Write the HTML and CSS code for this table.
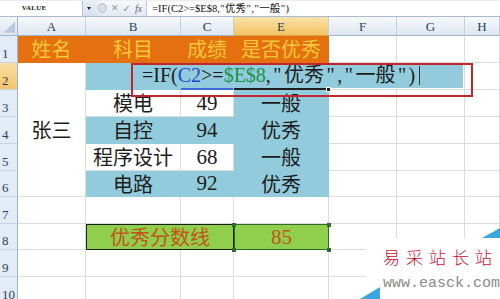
FILE: index.html
```html
<!DOCTYPE html>
<html lang="zh-CN">
<head>
<meta charset="utf-8">
<title>IF 公式</title>
<link rel="stylesheet" href="styles.css">
</head>
<body>
<div class="app">
  <div class="fbar">
    <div class="namebox">VALUE</div>
    <div class="nb-arrow"></div>
    <div class="fbtns">
      <span class="circ"></span>
      <span class="fx-x">✕</span>
      <span class="fx-ok">✓</span>
      <span class="fx-fx">fx</span>
    </div>
    <div class="finput">=IF(C2&gt;=$E$8,<span class="q">"</span>优秀<span class="q">"</span>,<span class="q">"</span>一般<span class="q">"</span>)</div>
  </div>

  <div class="sheet">
    <div class="corner"><svg width="18" height="19" viewBox="0 0 18 19"><polygon points="4,16 16,16 16,4" fill="#b7c9de"/></svg></div>
    <div class="ch">A</div><div class="ch">B</div><div class="ch">C</div><div class="ch sel">E</div><div class="ch">F</div><div class="ch">G</div><div class="ch">H</div>

    <div class="rh">1</div>
    <div class="c o">姓名</div><div class="c o">科目</div><div class="c o">成绩</div><div class="c o">是否优秀</div><div class="c"></div><div class="c"></div><div class="c"></div>

    <div class="rh sel">2</div>
    <div class="c merge-a">张三</div><div class="c b"></div><div class="c b"></div><div class="c b"></div><div class="c"></div><div class="c"></div><div class="c"></div>

    <div class="rh">3</div>
    <div class="c">模电</div><div class="c num">49</div><div class="c b">一般</div><div class="c"></div><div class="c"></div><div class="c"></div>

    <div class="rh">4</div>
    <div class="c b">自控</div><div class="c b num">94</div><div class="c b">优秀</div><div class="c"></div><div class="c"></div><div class="c"></div>

    <div class="rh">5</div>
    <div class="c">程序设计</div><div class="c num">68</div><div class="c b">一般</div><div class="c"></div><div class="c"></div><div class="c"></div>

    <div class="rh">6</div>
    <div class="c b">电路</div><div class="c b num">92</div><div class="c b">优秀</div><div class="c"></div><div class="c"></div><div class="c"></div>

    <div class="rh">7</div>
    <div class="c"></div><div class="c"></div><div class="c"></div><div class="c"></div><div class="c"></div><div class="c"></div><div class="c"></div>

    <div class="rh">8</div>
    <div class="c"></div><div class="c g merge-bc">优秀分数线</div><div class="c g ge num">85</div><div class="c"></div><div class="c"></div><div class="c"></div>

    <div class="rh">9</div>
    <div class="c"></div><div class="c"></div><div class="c"></div><div class="c"></div><div class="c"></div><div class="c"></div><div class="c"></div>

    <div class="rh">10</div>
    <div class="c"></div><div class="c"></div><div class="c"></div><div class="c"></div><div class="c"></div><div class="c"></div><div class="c"></div>

    <div class="editbox">=IF(<span class="ref-c">C2</span>&gt;=<span class="ref-e">$E$8</span>,<span class="q">"</span>优秀<span class="q">"</span>,<span class="q">"</span>一般<span class="q">"</span>)<span class="caret"></span></div>
    <div class="refline-c"></div>
    <div class="activeline"></div>
    <div class="handle"></div>
    <div class="ref-e8"><i class="d tl"></i><i class="d tr"></i><i class="d bl"></i><i class="d br"></i></div>
    <div class="redbox"></div>
  </div>

  <div class="watermark">
    <svg class="wm-bg" width="140" height="71" viewBox="0 0 140 71">
      <polygon points="6,10 140,10 140,71 6,71" fill="#ffffff"/>
      <polygon points="122,10 140,10 140,0" fill="#39a6df"/>
      <polygon points="0,71 20,71 20,59" fill="#39a6df"/>
    </svg>
    <p class="wm-cn">易采站长站</p>
    <p class="wm-url">www.easck.com</p>
  </div>
</div>
</body>
</html>
```

FILE: styles.css
```css
html, body {
  margin: 0;
  padding: 0;
}
body {
  width: 500px;
  height: 299px;
  overflow: hidden;
  background: #ffffff;
  font-family: "Liberation Serif", "Noto Sans CJK SC", serif;
  color: #1b1b1b;
}
.app {
  position: relative;
  width: 500px;
  height: 299px;
  overflow: hidden;
}

/* formula bar */
.fbar {
  display: flex;
  align-items: center;
  height: 17px;
  background: linear-gradient(#e9eef6, #d6e0ee);
  border-bottom: 1px solid #a8bbd3;
  box-sizing: border-box;
}
.namebox {
  width: 83px;
  height: 15px;
  box-sizing: border-box;
  background: #ffffff;
  border-right: 1px solid #b8c6d8;
  font-size: 7px;
  font-weight: bold;
  letter-spacing: 0.2px;
  color: #222;
  display: flex;
  align-items: center;
  justify-content: center;
  padding-right: 14px;
}
.nb-arrow {
  width: 0;
  height: 0;
  margin: 0 4px 0 4px;
  border-left: 2.5px solid transparent;
  border-right: 2.5px solid transparent;
  border-top: 3px solid #222;
}
.fbtns {
  display: flex;
  align-items: center;
  gap: 4px;
  height: 15px;
  padding: 0 4px 0 2px;
  border-radius: 8px 0 0 8px;
  background: linear-gradient(#f7f9fc, #e3e9f2);
}
.circ {
  width: 10px;
  height: 10px;
  border-radius: 50%;
  background: #d7dde6;
  border: 1px solid #b6c0cc;
  box-sizing: border-box;
}
.fx-x {
  font-family: "DejaVu Sans", sans-serif;
  font-size: 9px;
  color: #8a94a2;
}
.fx-ok {
  font-family: "DejaVu Sans", sans-serif;
  font-size: 10px;
  color: #7c9a7a;
}
.fx-fx {
  font-style: italic;
  font-size: 10px;
  color: #667;
}
.finput {
  flex: 1;
  height: 15px;
  background: #ffffff;
  border-left: 1px solid #b8c6d8;
  font-size: 10.5px;
  line-height: 15px;
  padding-left: 5px;
  white-space: nowrap;
  color: #111;
}
.finput .q {
  padding: 0 0.5px;
}

/* sheet */
.sheet {
  position: relative;
  display: grid;
  grid-template-columns: 18px 68px 95px 53px 95px 68px 68px 35px;
  grid-template-rows: 19px 27px 27px 27px 27px 27px 26px 27px 26px 27px 27px;
}
.corner {
  background: linear-gradient(#f3f6fb, #dde5ef);
  border-right: 1px solid #9eb6ce;
  border-bottom: 1px solid #9eb6ce;
  box-sizing: border-box;
  display: flex;
}
.ch {
  background: linear-gradient(#f7f9fc, #dfe6f0);
  border-right: 1px solid #c2cfdf;
  border-bottom: 1px solid #9eb6ce;
  box-sizing: border-box;
  color: #2b3f5c;
  font-size: 13px;
  line-height: 13px;
  display: flex;
  align-items: flex-end;
  justify-content: center;
  padding-bottom: 2px;
}
.ch.sel {
  background: linear-gradient(#fae2a9, #f2c465);
  border-bottom-color: #d9a64a;
}
.rh {
  background: #e3ebf6;
  border-right: 1px solid #9eb6ce;
  border-bottom: 1px solid #c5d3e4;
  box-sizing: border-box;
  color: #2b3f5c;
  font-size: 13px;
  line-height: 13px;
  display: flex;
  align-items: flex-end;
  padding: 0 0 2px 2px;
}
.rh.sel {
  background: linear-gradient(#fadfa3, #f3c56a);
}

.c {
  box-sizing: border-box;
  border-right: 1px solid #dadcdf;
  border-bottom: 1px solid #dadcdf;
  display: flex;
  align-items: center;
  justify-content: center;
  font-family: "Noto Sans CJK SC", sans-serif;
  font-size: 20px;
  line-height: 1;
  color: #1c1c1c;
  white-space: nowrap;
}
.c.num {
  font-family: "Liberation Serif", serif;
  font-size: 21px;
}
.c.o {
  background: #e5700f;
  border-color: transparent;
  color: #fcc83a;
}
.c.b {
  background: #92cbdb;
  border-color: transparent;
}
.merge-a {
  grid-row: span 5;
}
.merge-bc {
  grid-column: span 2;
}
.c.g {
  background: #8fcf4c;
  border: 1px solid #141f10;
  color: #c4521b;
}
.c.ge {
  border-color: #2f6a2a;
}

/* overlays on the sheet (edit mode) */
.editbox {
  position: absolute;
  left: 86px;
  top: 46px;
  width: 377px;
  height: 25px;
  background: #92cbdb;
  font-family: "Liberation Serif", "Noto Sans CJK SC", serif;
  font-size: 20px;
  line-height: 25px;
  white-space: nowrap;
  padding-left: 56px;
  box-sizing: border-box;
  color: #1c1c1c;
}
.editbox .q {
  padding: 0 2.5px;
}
.ref-c {
  color: #2745c8;
}
.ref-e {
  color: #17944a;
}
.caret {
  display: inline-block;
  width: 1px;
  height: 19px;
  background: #333;
  margin-left: 4px;
  vertical-align: -3px;
}
.refline-c {
  position: absolute;
  left: 181px;
  top: 71px;
  width: 52px;
  height: 2px;
  background: #3f68d6;
}
.activeline {
  position: absolute;
  left: 234px;
  top: 71px;
  width: 95px;
  height: 2px;
  background: #1e1e1e;
}
.handle {
  position: absolute;
  left: 326px;
  top: 70px;
  width: 5px;
  height: 5px;
  background: #1e1e1e;
  border: 1px solid #fff;
  box-sizing: border-box;
}
.ref-e8 {
  position: absolute;
  left: 233px;
  top: 207px;
  width: 97px;
  height: 27px;
}
.d {
  position: absolute;
  width: 4px;
  height: 4px;
  background: #2f6a2a;
}
.d.tl { left: -1px; top: -1px; }
.d.tr { right: -1px; top: -1px; }
.d.bl { left: -1px; bottom: -1px; }
.d.br { right: -1px; bottom: -1px; }
.redbox {
  position: absolute;
  left: 131px;
  top: 46px;
  width: 342px;
  height: 34px;
  border: 2px solid #c0272d;
  box-sizing: border-box;
}

/* watermark */
.watermark {
  position: absolute;
  left: 360px;
  top: 228px;
  width: 140px;
  height: 71px;
}
.wm-bg {
  position: absolute;
  left: 0;
  top: 0;
}
.wm-cn {
  position: relative;
  margin: 0;
  padding: 19px 0 0 23px;
  font-family: "Noto Sans CJK SC", sans-serif;
  font-weight: 300;
  font-size: 17px;
  line-height: 20px;
  letter-spacing: 6px;
  color: #c8102e;
  white-space: nowrap;
}
.wm-url {
  position: relative;
  margin: 0;
  padding: 9px 0 0 23px;
  font-family: "Liberation Mono", monospace;
  font-size: 15px;
  line-height: 15px;
  color: #8a8a8a;
  white-space: nowrap;
}
```
